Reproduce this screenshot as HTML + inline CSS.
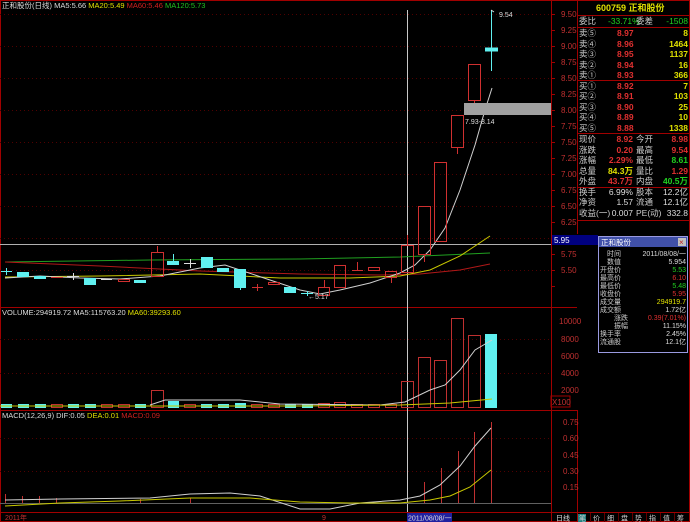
<!DOCTYPE html>
<html><head><meta charset="utf-8"><style>
body{margin:0;background:#000;width:690px;height:522px;overflow:hidden}
svg{display:block;font-family:"Liberation Sans","Noto Sans CJK SC",sans-serif}
.c{font-family:"Liberation Sans","Noto Sans CJK SC",sans-serif}
</style></head><body>
<svg width="690" height="522" viewBox="0 0 690 522" xmlns="http://www.w3.org/2000/svg">
<rect width="690" height="522" fill="#000"/>
<g stroke="#a00000" stroke-width="1" fill="none">
<rect x="0.5" y="0.5" width="689" height="521"/>
<line x1="551.5" y1="0" x2="551.5" y2="522"/>
<line x1="577.5" y1="0" x2="577.5" y2="234"/>
<line x1="0" y1="307.5" x2="577" y2="307.5"/>
<line x1="0" y1="410.5" x2="577" y2="410.5"/>
<line x1="0" y1="512.5" x2="690" y2="512.5"/>
<line x1="577.5" y1="410" x2="577.5" y2="522"/>
<line x1="577" y1="15.5" x2="690" y2="15.5"/>
<line x1="577" y1="27.5" x2="690" y2="27.5"/>
<line x1="577" y1="80.5" x2="690" y2="80.5"/>
<line x1="577" y1="133.5" x2="690" y2="133.5"/>
<line x1="577" y1="187.5" x2="690" y2="187.5"/>
<line x1="577" y1="220.5" x2="690" y2="220.5"/>
</g>
<g stroke="#500000" stroke-width="1" stroke-dasharray="1,3">
<line x1="0" y1="14.5" x2="551" y2="14.5"/><line x1="0" y1="46.5" x2="551" y2="46.5"/>
<line x1="0" y1="78.5" x2="551" y2="78.5"/><line x1="0" y1="110.5" x2="551" y2="110.5"/>
<line x1="0" y1="142.5" x2="551" y2="142.5"/><line x1="0" y1="174.5" x2="551" y2="174.5"/>
<line x1="0" y1="206.5" x2="551" y2="206.5"/><line x1="0" y1="238.5" x2="551" y2="238.5"/>
<line x1="0" y1="270.5" x2="551" y2="270.5"/>
<line x1="0" y1="339.5" x2="551" y2="339.5"/><line x1="0" y1="373.5" x2="551" y2="373.5"/>
<line x1="0" y1="438.5" x2="551" y2="438.5"/><line x1="0" y1="471.5" x2="551" y2="471.5"/>
</g>
<g stroke="#a00000">
<line x1="551" y1="14.5" x2="555" y2="14.5"/><line x1="551" y1="30.5" x2="555" y2="30.5"/>
<line x1="551" y1="46.5" x2="555" y2="46.5"/><line x1="551" y1="62.5" x2="555" y2="62.5"/>
<line x1="551" y1="78.5" x2="555" y2="78.5"/><line x1="551" y1="94.5" x2="555" y2="94.5"/>
<line x1="551" y1="110.5" x2="555" y2="110.5"/><line x1="551" y1="126.5" x2="555" y2="126.5"/>
<line x1="551" y1="142.5" x2="555" y2="142.5"/><line x1="551" y1="158.5" x2="555" y2="158.5"/>
<line x1="551" y1="174.5" x2="555" y2="174.5"/><line x1="551" y1="190.5" x2="555" y2="190.5"/>
<line x1="551" y1="206.5" x2="555" y2="206.5"/><line x1="551" y1="222.5" x2="555" y2="222.5"/>
<line x1="551" y1="254.5" x2="555" y2="254.5"/><line x1="551" y1="270.5" x2="555" y2="270.5"/>
<line x1="551" y1="286.5" x2="555" y2="286.5"/>
</g>
<g fill="#c03030" font-size="8" class="c">
<text x="561" y="17">9.50</text><text x="561" y="33">9.25</text><text x="561" y="49">9.00</text>
<text x="561" y="65">8.75</text><text x="561" y="81">8.50</text><text x="561" y="97">8.25</text>
<text x="561" y="113">8.00</text><text x="561" y="129">7.75</text><text x="561" y="145">7.50</text>
<text x="561" y="161">7.25</text><text x="561" y="177">7.00</text><text x="561" y="193">6.75</text>
<text x="561" y="209">6.50</text><text x="561" y="225">6.25</text>
<text x="561" y="257">5.75</text><text x="561" y="273">5.50</text>
<text x="559" y="324">10000</text><text x="561" y="342">8000</text><text x="561" y="359">6000</text>
<text x="561" y="376">4000</text><text x="561" y="393">2000</text>
<text x="563" y="425">0.75</text><text x="563" y="441">0.60</text><text x="563" y="458">0.45</text>
<text x="563" y="474">0.30</text><text x="563" y="490">0.15</text>
</g>
<rect x="551" y="396" width="19" height="11" fill="none" stroke="#a00000"/>
<text x="552" y="405" fill="#c03030" font-size="8" class="c">X100</text>
<rect x="552" y="235" width="46" height="10" fill="#000080"/>
<text x="554" y="243" fill="#fff" font-size="8" class="c">5.95</text>
<line x1="0" y1="244.5" x2="551" y2="244.5" stroke="#b0b0b0"/>
<line x1="407.5" y1="10" x2="407.5" y2="512" stroke="#c8c8c8"/>
<text x="2" y="8" font-size="7.5" class="c"><tspan fill="#ddd">正和股份(日线) MA5:5.66 </tspan><tspan fill="#e0e000">MA20:5.49 </tspan><tspan fill="#d02020">MA60:5.46 </tspan><tspan fill="#20c020">MA120:5.73</tspan></text>
<text x="2" y="315" font-size="7.5" class="c"><tspan fill="#ddd">VOLUME:294919.72 MA5:115763.20 </tspan><tspan fill="#e0e000">MA60:39293.60</tspan></text>
<text x="2" y="418" font-size="7.5" class="c"><tspan fill="#ddd">MACD(12,26,9) DIF:0.05 </tspan><tspan fill="#e0e000">DEA:0.01 </tspan><tspan fill="#d02020">MACD:0.09</tspan></text>
<polyline fill="none" stroke="#20a020" points="5,262 150,260 300,259 400,257 490,253"/>
<polyline fill="none" stroke="#b01818" points="5,262 100,266 200,271 300,274 380,275 420,274 460,270 490,264"/>
<polyline fill="none" stroke="#c8c800" points="5,277 100,276 200,274 280,278 350,278 400,276 430,270 460,256 490,236"/>
<polyline fill="none" stroke="#d0d0d0" points="5,278 40,276 80,278 120,279 160,276 200,268 225,265 240,270 270,280 300,290 320,294 340,290 370,283 400,273 415,265 430,250 445,228 460,190 475,145 485,110 492,88"/>
<g stroke="#d03030" fill="none" stroke-width="1">
<rect x="151.5" y="252.5" width="12" height="24"/><line x1="157.5" y1="246" x2="157.5" y2="252"/>
<line x1="51" y1="277.5" x2="63" y2="277.5"/><line x1="252" y1="287.5" x2="263" y2="287.5"/><line x1="257.5" y1="284" x2="257.5" y2="291"/>
<rect x="268.5" y="282.5" width="11" height="2"/><rect x="118.5" y="279.5" width="11" height="2"/>
<rect x="318.5" y="287.5" width="11" height="8"/><line x1="324.5" y1="280" x2="324.5" y2="287"/>
<rect x="334.5" y="265.5" width="11" height="22"/>
<line x1="352" y1="270.5" x2="363" y2="270.5"/><line x1="357.5" y1="262" x2="357.5" y2="270"/>
<rect x="368.5" y="267.5" width="11" height="3"/>
<rect x="385.5" y="271.5" width="11" height="6"/><line x1="391.5" y1="277" x2="391.5" y2="283"/>
<rect x="401.5" y="245.5" width="12" height="27"/><line x1="407.5" y1="235" x2="407.5" y2="245"/>
<rect x="418.5" y="206.5" width="12" height="48"/><line x1="424.5" y1="254" x2="424.5" y2="262"/>
<rect x="434.5" y="162.5" width="12" height="79"/>
<rect x="451.5" y="115.5" width="12" height="32"/><line x1="457.5" y1="147" x2="457.5" y2="154"/>
<rect x="468.5" y="64.5" width="12" height="36"/><line x1="474.5" y1="100" x2="474.5" y2="103"/>
</g>
<g fill="#60f0f0" stroke="#60f0f0">
<line x1="1" y1="271.5" x2="12" y2="271.5"/><line x1="6.5" y1="268" x2="6.5" y2="275"/>
<rect x="17.5" y="272.5" width="11" height="4"/><rect x="34.5" y="276.5" width="11" height="2"/>
<line x1="67" y1="276.5" x2="79" y2="276.5" stroke="#ddd"/><line x1="73.5" y1="273" x2="73.5" y2="280" stroke="#ddd"/>
<rect x="84.5" y="278.5" width="11" height="6"/><line x1="101" y1="279.5" x2="112" y2="279.5" stroke="#ddd"/>
<rect x="134.5" y="280.5" width="11" height="2"/>
<rect x="167.5" y="261.5" width="11" height="3"/><line x1="173.5" y1="254" x2="173.5" y2="261"/>
<line x1="184" y1="263.5" x2="196" y2="263.5" stroke="#ddd"/><line x1="190.5" y1="259" x2="190.5" y2="268" stroke="#ddd"/>
<rect x="201.5" y="257.5" width="11" height="10"/>
<rect x="217.5" y="268.5" width="11" height="3"/>
<rect x="234.5" y="269.5" width="11" height="18"/><line x1="240.5" y1="287" x2="240.5" y2="290"/>
<rect x="284.5" y="287.5" width="11" height="5"/>
<line x1="301" y1="293.5" x2="313" y2="293.5"/><line x1="307.5" y1="291" x2="307.5" y2="296"/>
<line x1="491.5" y1="10" x2="491.5" y2="71"/><rect x="485.5" y="48" width="12" height="3"/>
</g>
<path d="M491 10 l3 2" stroke="#ddd" fill="none"/>
<text x="499" y="17" fill="#ddd" font-size="7" class="c">9.54</text>
<text x="308" y="299" fill="#ddd" font-size="7" class="c">←5.17</text>
<rect x="464" y="103" width="87" height="12" fill="#a0a0a0"/>
<text x="465" y="124" fill="#ddd" font-size="7" class="c">7.93-8.14</text>
<g fill="#60f0f0">
<rect x="1" y="404" width="11" height="4"/><rect x="18" y="404" width="11" height="4"/><rect x="35" y="404" width="11" height="4"/>
<rect x="68" y="404" width="11" height="4"/><rect x="85" y="404" width="11" height="4"/><rect x="135" y="404" width="11" height="4"/>
<rect x="168" y="401" width="11" height="7"/><rect x="201" y="404" width="11" height="4"/><rect x="218" y="404" width="11" height="4"/>
<rect x="235" y="403" width="11" height="5"/><rect x="285" y="404" width="11" height="4"/><rect x="302" y="404" width="11" height="4"/>
<rect x="485" y="334" width="12" height="74"/>
</g>
<g fill="none" stroke="#c03030">
<rect x="51.5" y="404.5" width="11" height="3"/><rect x="101.5" y="404.5" width="11" height="3"/><rect x="118.5" y="404.5" width="11" height="3"/>
<rect x="151.5" y="390.5" width="12" height="17"/><rect x="184.5" y="404.5" width="11" height="3"/><rect x="251.5" y="404.5" width="11" height="3"/>
<rect x="268.5" y="404.5" width="11" height="3"/><rect x="318.5" y="403.5" width="11" height="4"/><rect x="334.5" y="402.5" width="11" height="5"/>
<rect x="351.5" y="404.5" width="11" height="3"/><rect x="368.5" y="404.5" width="11" height="3"/><rect x="385.5" y="404.5" width="11" height="3"/>
<rect x="401.5" y="381.5" width="12" height="26"/><rect x="418.5" y="357.5" width="12" height="50"/><rect x="434.5" y="360.5" width="12" height="47"/>
<rect x="451.5" y="318.5" width="12" height="89"/><rect x="468.5" y="335.5" width="12" height="72"/>
</g>
<polyline fill="none" stroke="#d0d0d0" points="150,405 165,400 240,400 280,404 380,405 405,402 430,390 445,385 460,370 475,350 492,340"/>
<polyline fill="none" stroke="#c8c800" points="0,406 300,406 400,405 450,403 492,399"/>
<line x1="0" y1="503.5" x2="551" y2="503.5" stroke="#606060"/>
<g stroke="#c03030">
<line x1="5.5" y1="503" x2="5.5" y2="494"/><line x1="22.5" y1="503" x2="22.5" y2="496"/><line x1="39.5" y1="503" x2="39.5" y2="496"/>
<line x1="56.5" y1="503" x2="56.5" y2="498"/><line x1="140.5" y1="503" x2="140.5" y2="499"/><line x1="190.5" y1="503" x2="190.5" y2="498"/>
<line x1="424.5" y1="503" x2="424.5" y2="482"/><line x1="441.5" y1="503" x2="441.5" y2="468"/><line x1="458.5" y1="503" x2="458.5" y2="451"/>
<line x1="474.5" y1="503" x2="474.5" y2="432"/><line x1="491.5" y1="503" x2="491.5" y2="422"/>
</g>
<polyline fill="none" stroke="#d0d0d0" points="5,500 60,499 150,498 190,494 230,493 260,496 300,509 330,509 360,503 400,500 420,496 440,485 460,466 475,446 491,428"/>
<polyline fill="none" stroke="#c8c800" points="5,506 60,503 120,501 190,498 250,498 300,502 350,503 400,503 430,500 450,496 470,487 491,470"/>
<text x="5" y="520" fill="#c03030" font-size="7" class="c">2011年</text>
<text x="322" y="520" fill="#c03030" font-size="7" class="c">9</text>
<rect x="407" y="513" width="45" height="9" fill="#2020a0"/>
<text x="408" y="520.5" fill="#ddd" font-size="7" class="c">2011/08/08/一</text>
<text x="556" y="520.5" fill="#ddd" font-size="7" class="c">日线</text>
<rect x="578" y="514" width="8" height="8" fill="#208080"/>
<g fill="#ccc" font-size="7" class="c">
<text x="579" y="520.5">笔</text><text x="593" y="520.5">价</text><text x="607" y="520.5">细</text><text x="621" y="520.5">盘</text>
<text x="635" y="520.5">势</text><text x="649" y="520.5">指</text><text x="663" y="520.5">值</text><text x="677" y="520.5">筹</text>
</g>
<g stroke="#600000"><line x1="590.5" y1="513" x2="590.5" y2="522"/><line x1="604.5" y1="513" x2="604.5" y2="522"/><line x1="618.5" y1="513" x2="618.5" y2="522"/><line x1="632.5" y1="513" x2="632.5" y2="522"/><line x1="646.5" y1="513" x2="646.5" y2="522"/><line x1="660.5" y1="513" x2="660.5" y2="522"/><line x1="674.5" y1="513" x2="674.5" y2="522"/></g>
<text x="596" y="11" fill="#e0e000" font-size="9" font-weight="bold" class="c">600759 正和股份</text>
<g font-size="8.5" class="c">
<text x="579" y="24" fill="#ccc">委比</text><text x="608" y="24" fill="#20d020">-33.71%</text><text x="636" y="24" fill="#ccc">委差</text><text x="688" y="24" fill="#20d020" text-anchor="end">-1508</text>
</g>
<g font-size="8.5" class="c" font-weight="bold">
<g fill="#ccc" font-weight="normal"><text x="579" y="36">卖⑤</text><text x="579" y="47">卖④</text><text x="579" y="57">卖③</text><text x="579" y="68">卖②</text><text x="579" y="78">卖①</text>
<text x="579" y="89">买①</text><text x="579" y="99">买②</text><text x="579" y="110">买③</text><text x="579" y="120">买④</text><text x="579" y="131">买⑤</text></g>
<g fill="#e03030"><text x="617" y="36">8.97</text><text x="617" y="47">8.96</text><text x="617" y="57">8.95</text><text x="617" y="68">8.94</text><text x="617" y="78">8.93</text>
<text x="617" y="89">8.92</text><text x="617" y="99">8.91</text><text x="617" y="110">8.90</text><text x="617" y="120">8.89</text><text x="617" y="131">8.88</text></g>
<g fill="#e0e000" text-anchor="end"><text x="688" y="36">8</text><text x="688" y="47">1464</text><text x="688" y="57">1137</text><text x="688" y="68">16</text><text x="688" y="78">366</text>
<text x="688" y="89">7</text><text x="688" y="99">103</text><text x="688" y="110">25</text><text x="688" y="120">10</text><text x="688" y="131">1338</text></g>
</g>
<g font-size="8.5" class="c">
<g fill="#ccc"><text x="579" y="142">现价</text><text x="579" y="153">涨跌</text><text x="579" y="163">涨幅</text><text x="579" y="174">总量</text><text x="579" y="184">外盘</text>
<text x="636" y="142">今开</text><text x="636" y="153">最高</text><text x="636" y="163">最低</text><text x="636" y="174">量比</text><text x="636" y="184">内盘</text>
<text x="579" y="195">换手</text><text x="579" y="205">净资</text><text x="579" y="216">收益(一)</text>
<text x="636" y="195">股本</text><text x="636" y="205">流通</text><text x="636" y="216">PE(动)</text></g>
<g text-anchor="end" font-weight="bold">
<text x="633" y="142" fill="#e03030">8.92</text><text x="633" y="153" fill="#e03030">0.20</text><text x="633" y="163" fill="#e03030">2.29%</text><text x="633" y="174" fill="#e0e000">84.3万</text><text x="633" y="184" fill="#e03030">43.7万</text>
<text x="688" y="142" fill="#e03030">8.98</text><text x="688" y="153" fill="#e03030">9.54</text><text x="688" y="163" fill="#20d020">8.61</text><text x="688" y="174" fill="#e03030">1.29</text><text x="688" y="184" fill="#20d020">40.5万</text>
</g>
<g text-anchor="end" fill="#ddd"><text x="633" y="195">6.99%</text><text x="633" y="205">1.57</text><text x="633" y="216">0.007</text>
<text x="688" y="195">12.2亿</text><text x="688" y="205">12.1亿</text><text x="688" y="216">332.8</text></g>
</g>
<rect x="598.5" y="236.5" width="89" height="116" fill="#000" stroke="#9a9ae0"/>
<rect x="599" y="237" width="88" height="10" fill="#4050a8"/>
<text x="601" y="245" fill="#fff" font-size="7.5" class="c">正和股份</text>
<rect x="678" y="238" width="8" height="8" fill="#c0c0c0"/><text x="679" y="245" fill="#c02020" font-size="8" class="c">×</text>
<g font-size="7" class="c">
<g fill="#ccc"><text x="607" y="256">时间</text><text x="607" y="264">数值</text><text x="600" y="272">开盘价</text><text x="600" y="280">最高价</text><text x="600" y="288">最低价</text><text x="600" y="296">收盘价</text><text x="600" y="304">成交量</text><text x="600" y="312">成交额</text><text x="614" y="320">涨跌</text><text x="614" y="328">振幅</text><text x="600" y="336">换手率</text><text x="600" y="344">流通股</text></g>
<g text-anchor="end"><text x="686" y="256" fill="#ddd">2011/08/08/一</text><text x="686" y="264" fill="#ddd">5.954</text><text x="686" y="272" fill="#20d020">5.53</text><text x="686" y="280" fill="#e03030">6.10</text><text x="686" y="288" fill="#20d020">5.48</text><text x="686" y="296" fill="#e03030">5.95</text><text x="686" y="304" fill="#e0e000">294919.7</text><text x="686" y="312" fill="#ddd">1.72亿</text><text x="686" y="320" fill="#e03030">0.39(7.01%)</text><text x="686" y="328" fill="#ddd">11.15%</text><text x="686" y="336" fill="#ddd">2.45%</text><text x="686" y="344" fill="#ddd">12.1亿</text></g>
</g>
</svg>
</body></html>
